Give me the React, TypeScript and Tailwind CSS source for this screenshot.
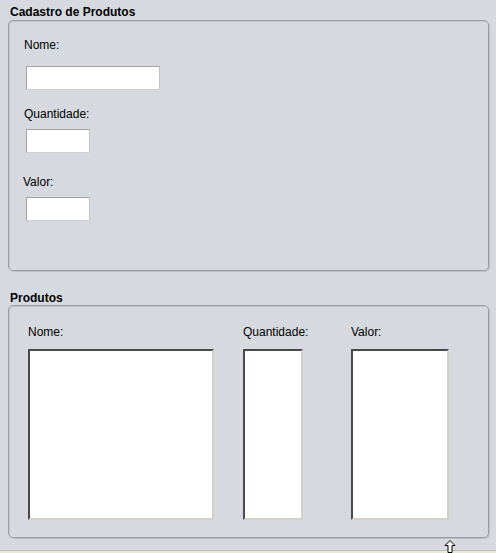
export default function App() {
    return (
        <div className="w-[496px] h-[553px] bg-[#d6d9df] text-[12px] leading-[16px] text-black font-['Liberation_Sans',Arial,sans-serif] relative overflow-hidden flex flex-col">
            <p className="pl-[10px] pt-[4px] font-bold">Cadastro de Produtos</p>

            <section className="ml-[8px] w-[481px] h-[251px] rounded-[5px] border border-[#9a9da3] shadow-[inset_1px_1px_0_#c3c6cc,1px_1px_0_#bcbfc5] pl-[15px] pt-[16px]">
                <p>Nome:</p>
                <input className="block mt-[13px] ml-[2px] w-[134px] h-[24px] bg-white border border-[#a3a3a3] border-b-[#d0d0d0] border-r-[#c4c4c4] outline-none" />

                <p className="mt-[16px]">Quantidade:</p>
                <input className="block mt-[7px] ml-[2px] w-[64px] h-[24px] bg-white border border-[#a3a3a3] border-b-[#d0d0d0] border-r-[#c4c4c4] outline-none" />

                <p className="mt-[21px] -ml-[1px]">Valor:</p>
                <input className="block mt-[7px] ml-[2px] w-[64px] h-[24px] bg-white border border-[#a3a3a3] border-b-[#d0d0d0] border-r-[#c4c4c4] outline-none" />
            </section>

            <p className="pl-[10px] mt-[19px] font-bold">Produtos</p>

            <section className="ml-[8px] mt-[-1px] w-[481px] h-[233px] rounded-[5px] border border-[#9a9da3] shadow-[inset_1px_1px_0_#c3c6cc,1px_1px_0_#bcbfc5] pl-[19px] pt-[18px] flex">
                <div className="flex flex-col w-[215px]">
                    <p>Nome:</p>
                    <div className="mt-[9px] w-[186px] h-[171px] bg-white border-[2px] border-t-[#4a4a4a] border-l-[#4a4a4a] border-b-[#d4d0c8] border-r-[#d4d0c8]" />
                </div>
                <div className="flex flex-col w-[108px]">
                    <p>Quantidade:</p>
                    <div className="mt-[9px] w-[60px] h-[171px] bg-white border-[2px] border-t-[#4a4a4a] border-l-[#4a4a4a] border-b-[#d4d0c8] border-r-[#d4d0c8]" />
                </div>
                <div className="flex flex-col">
                    <p>Valor:</p>
                    <div className="mt-[9px] w-[98px] h-[171px] bg-white border-[2px] border-t-[#4a4a4a] border-l-[#4a4a4a] border-b-[#d4d0c8] border-r-[#d4d0c8]" />
                </div>
            </section>

            <div className="mt-[12px] h-[1px] bg-[#c3bcae]" />
            <div className="flex-1 bg-[#e9e7e1]" />

            <svg className="absolute left-[444px] top-[540px]" width="12" height="13" viewBox="0 0 12 13">
                <path d="M6 0.5 L11 5.5 L8 5.5 L8 12.5 L4 12.5 L4 5.5 L1 5.5 Z" fill="white" stroke="black" strokeWidth="1" />
            </svg>
        </div>
    );
}
